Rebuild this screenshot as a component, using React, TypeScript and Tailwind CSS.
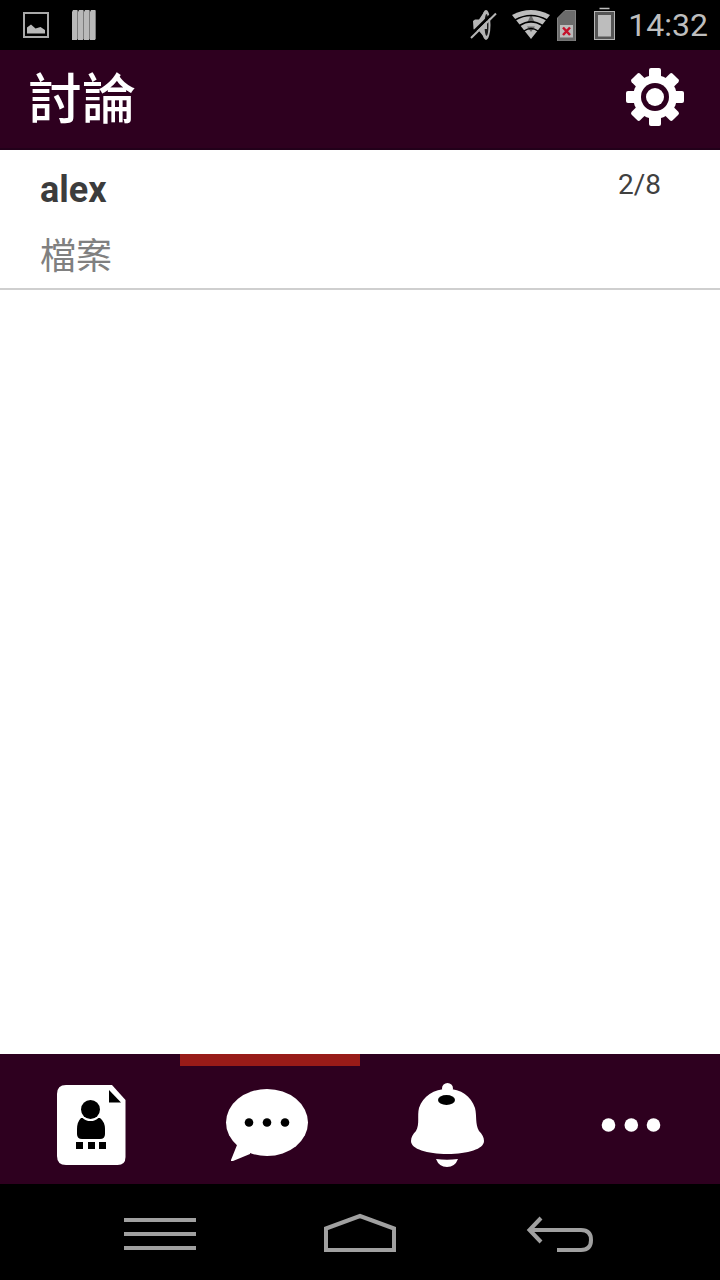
import React from 'react';

const threads = [{ id: 1, name: 'alex', message: '檔案', date: '2/8' }];

function PictureIcon() {
  return (
    <svg className="h-8 w-[26px]" viewBox="0 0 26 32">
      <rect x="1" y="4" width="24" height="24" fill="none" stroke="#a9a9a9" strokeWidth="2" />
      <path d="M4 24.500V18.500L8 15.500L12.500 19.500L17.500 18L22 21V24.500Z" fill="#b9b9b9" />
    </svg>
  );
}

function BarsIcon() {
  return (
    <svg className="h-8 w-6" viewBox="0 0 24 32">
      {[0, 6, 12, 18].map((x) => (
        <g key={x}>
          <path d={`M${x} 3l1-2h4l1 1v27l-1 2H${x}Z`} fill="#b9b9b9" />
          <path d={`M${x + 5.5} 2v28`} stroke="#7c7c7c" strokeWidth="1" />
        </g>
      ))}
    </svg>
  );
}

function MuteIcon() {
  return (
    <svg className="h-8 w-7" viewBox="0 0 28 32">
      <path d="M3 12L5 10.500H9L14 3V28L9 22H5L3.500 20Z" fill="#b5b5b5" />
      <ellipse cx="16" cy="16" rx="4.500" ry="15" fill="#b5b5b5" />
      <ellipse cx="16.500" cy="16" rx="2" ry="11" fill="#1a1a1a" />
      <path d="M12 11h5v9h-5z" fill="#b5b5b5" />
      <path d="M0 26.500L25 2" stroke="#000" strokeWidth="3" />
      <path d="M1 29L26 4.500" stroke="#b5b5b5" strokeWidth="2" />
    </svg>
  );
}

function WifiIcon() {
  return (
    <svg className="h-8 w-10" viewBox="0 0 40 32">
      <path d="M0 6Q19 -4 38 6L19 30Z" fill="#bdbdbd" />
      <path d="M15 14L19 5.500L23 14Z" fill="#6a6a6a" />
      <path d="M15 17.500H23L19 23Z" fill="#6a6a6a" />
      <g fill="none" stroke="#000" strokeWidth="1.500">
        <path d="M3 11Q19 2 35 11" />
        <path d="M7.500 16.500Q19 9 30.500 16.500" />
        <path d="M12 22Q19 17 26 22" />
      </g>
    </svg>
  );
}

function SimIcon() {
  return (
    <svg className="h-8 w-[22px]" viewBox="0 0 22 32">
      <path d="M1.500 32V9L9 1.500H19.500V32Z" fill="#6b6b6b" stroke="#848484" />
      <rect x="4" y="16" width="13" height="12.500" fill="#bcbcbc" />
      <path d="M7 18.500L14 26M14 18.500L7 26" stroke="#c4122c" strokeWidth="2.500" />
    </svg>
  );
}

function BatteryIcon() {
  return (
    <svg className="h-8 w-[22px] overflow-visible" viewBox="0 0 22 32">
      <path d="M5.500 -0.500h10" stroke="#bdbdbd" strokeWidth="1.500" />
      <rect x="0.500" y="2.500" width="20" height="28" fill="#555" stroke="#b5b5b5" />
      <rect x="4" y="6" width="13" height="21.500" fill="#bdbdbd" />
    </svg>
  );
}

function GearIcon() {
  return (
    <svg className="size-[60px]" viewBox="-30 -30 60 60">
      <g fill="#fff">
        <circle r="22" />
        {[0, 45, 90, 135].map((angle) => (
          <rect key={angle} x="-6" y="-29" width="12" height="58" rx="2" transform={`rotate(${angle})`} />
        ))}
      </g>
      <circle r="14" fill="#2e001f" />
      <circle r="9" fill="#fff" />
    </svg>
  );
}

function ContactsIcon() {
  return (
    <svg className="size-24" viewBox="0 0 96 96">
      <path d="M24 14H70L83.500 29V86Q83.500 94 75.500 94H24Q15 94 15 85V23Q15 14 24 14Z" fill="#fff" />
      <path d="M67 19V31.500H79Z" />
      <path d="M39 47H58Q63 51 63 58V63Q63 68 58 68H40Q35 68 35 63V58Q35 51 39 47Z" />
      <circle cx="48.500" cy="38.500" r="11.500" fill="#fff" />
      <circle cx="48.500" cy="38.500" r="9.500" />
      <path d="M34 71h7v7h-7zM46 71h7v7h-7zM57 71h7v7h-7z" />
    </svg>
  );
}

function ChatIcon() {
  return (
    <svg className="size-24" viewBox="0 0 96 96">
      <ellipse cx="45" cy="51.500" rx="41" ry="33.500" fill="#fff" />
      <path d="M15 74L9 89V90H11L28 83L30 70Z" fill="#fff" />
      <circle cx="27" cy="51.500" r="4.300" />
      <circle cx="45" cy="51.500" r="4.300" />
      <circle cx="63" cy="51.500" r="4.300" />
    </svg>
  );
}

function BellIcon() {
  return (
    <svg className="size-24" viewBox="0 0 96 96">
      <g fill="#fff">
        <circle cx="45.500" cy="17.500" r="5.500" />
        <path d="M45.500 18C59 18 69 25 73 37C75 45 73 53 77 60C80 63 82 66 82 70C82 78 66 83 45.500 83C25 83 9 78 9 70C9 66 11 63 14 60C18 53 15 45 17 37C21 25 32 18 45.500 18Z" />
        <path d="M34 88Q45 89.500 56 88Q53 96 45 96Q37 96 34 88Z" />
      </g>
      <ellipse cx="44.500" cy="29" rx="8.500" ry="5" />
    </svg>
  );
}

function MoreIcon() {
  return (
    <svg className="size-24" viewBox="0 0 96 96" fill="#fff">
      <circle cx="26.500" cy="54" r="6.800" />
      <circle cx="49.300" cy="54" r="6.800" />
      <circle cx="71.500" cy="54" r="6.800" />
    </svg>
  );
}

const tabs = [
  { id: 'contacts', label: '聯絡人', Icon: ContactsIcon },
  { id: 'chat', label: '討論', Icon: ChatIcon },
  { id: 'alerts', label: '通知', Icon: BellIcon },
  { id: 'more', label: '更多', Icon: MoreIcon },
];

export default function App() {
  const [active, setActive] = React.useState('chat');

  return (
    <div className="flex min-h-screen flex-col bg-white font-[Roboto,'Noto_Sans_CJK_TC',sans-serif]">
      {/* Status bar */}
      <div className="flex h-[50px] items-center justify-between bg-black pr-3 pl-[23px]">
        <div className="flex items-center gap-[23px]">
          <PictureIcon />
          <BarsIcon />
        </div>
        <div className="flex items-center">
          <MuteIcon />
          <div className="ml-3.5 flex items-center gap-1">
            <WifiIcon />
            <SimIcon />
          </div>
          <div className="ml-4 flex items-center gap-3">
            <BatteryIcon />
            <span className="text-[32px] leading-[52px] text-[#bebebe]">14:32</span>
          </div>
        </div>
      </div>

      {/* Header */}
      <header className="flex h-[100px] items-center justify-between border-b-2 border-[#22001a] bg-[#2e001f] pr-[35px] pb-1 pl-7">
        <h1 className="pt-2 text-[54px] leading-[80px] font-medium text-white">討論</h1>
        <button type="button" aria-label="設定">
          <GearIcon />
        </button>
      </header>

      {/* Conversations */}
      <main className="flex-1">
        <ul>
          {threads.map((thread) => (
            <li key={thread.id} className="border-b-2 border-[#cfcfcf]">
              <a href="#" className="flex items-start justify-between pt-3 pr-[59px] pb-1 pl-10">
                <div>
                  <h2 className="text-4xl leading-[56px] font-bold text-[#3c3c3c]">{thread.name}</h2>
                  <p className="pt-3 text-4xl leading-[54px] text-[#808080]">{thread.message}</p>
                </div>
                <time className="text-[28px] leading-[46px] text-[#404040]">{thread.date}</time>
              </a>
            </li>
          ))}
        </ul>
      </main>

      {/* Tabs */}
      <nav className="grid grid-cols-4 bg-[#2e001f]">
        {tabs.map(({ id, label, Icon }) => (
          <button
            key={id}
            type="button"
            aria-label={label}
            aria-current={id === active ? 'page' : undefined}
            onClick={() => setActive(id)}
            className={`flex h-[130px] items-center justify-center border-t-12 pb-3 ${
              id === active ? 'border-[#981b18]' : 'border-transparent'
            }`}
          >
            <Icon />
          </button>
        ))}
      </nav>

      {/* System buttons */}
      <div className="grid h-24 grid-cols-3 bg-black px-[60px]">
        <button type="button" aria-label="Menu" className="flex items-center justify-center">
          <svg className="h-10 w-[72px]" viewBox="0 0 72 40" stroke="#a0a0a0" strokeWidth="4">
            <path d="M0 8H72M0 22H72M0 36H72" />
          </svg>
        </button>
        <button type="button" aria-label="Home" className="flex items-center justify-center">
          <svg className="h-10 w-[72px]" viewBox="0 0 72 40" fill="none" stroke="#a0a0a0" strokeWidth="4">
            <path d="M2 38V16.500L36 4L70 16.500V38Z" />
          </svg>
        </button>
        <button type="button" aria-label="Back" className="flex items-center justify-center">
          <svg className="h-10 w-[72px]" viewBox="0 0 72 40" fill="none" stroke="#a0a0a0" strokeWidth="4">
            <path d="M5 18H57C64 18 67 22 67 28S64 38 57 38H33" />
            <path d="M17 6L5.500 18L17 30" />
          </svg>
        </button>
      </div>
    </div>
  );
}
